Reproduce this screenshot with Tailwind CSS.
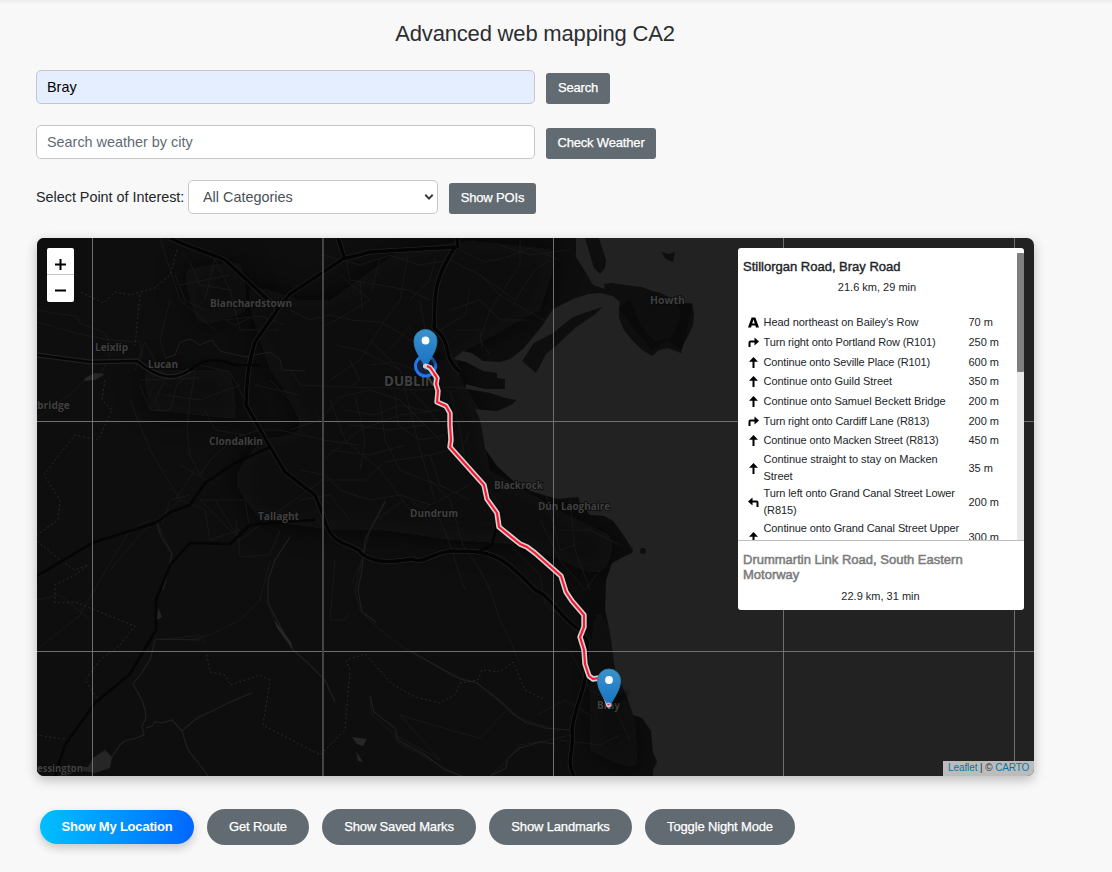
<!DOCTYPE html>
<html lang="en">
<head>
<meta charset="utf-8">
<title>Advanced web mapping CA2</title>
<script src="https://cdn.jsdelivr.net/npm/@tailwindcss/browser@4"></script>
</head>
<body class="h-[872px] overflow-hidden bg-[#f8f8f8] font-['Liberation_Sans',Arial,sans-serif] text-[#212529]">
<div class="h-1 bg-linear-to-b from-[#ececec] to-[#f8f8f8]"></div>
<main class="pl-9">
  <h1 class="mt-[15px] h-[51px] w-[998px] pt-px text-center text-[22px] leading-[28px] tracking-[-0.18px] text-[#2b2e31]">Advanced web mapping CA2</h1>

  <div class="flex h-[55px] items-start">
    <input value="Bray" class="h-[34px] w-[499px] rounded-[5px] border border-[#c4c6c9] bg-[#e5eefe] px-2.5 text-[14.4px] text-black">
    <button class="mt-[3px] ml-[11px] h-[31px] w-16 rounded-[3px] bg-[#616b71] pb-px text-[13px] tracking-[-0.17px] text-white [-webkit-text-stroke:0.25px_white]">Search</button>
  </div>
  <div class="flex h-[55px] items-start">
    <input placeholder="Search weather by city" class="h-[34px] w-[499px] rounded-[5px] border border-[#c4c6c9] bg-white px-2.5 text-[14.4px] placeholder:text-[#616b73]">
    <button class="mt-[3px] ml-[11px] h-[31px] w-[110px] rounded-[3px] bg-[#616b71] pb-px text-[13px] tracking-[-0.17px] text-white [-webkit-text-stroke:0.25px_white]">Check Weather</button>
  </div>
  <div class="flex h-[58px] items-start">
    <label class="w-[152px] text-[14.4px] leading-[34px] tracking-[-0.02px] whitespace-nowrap">Select Point of Interest:</label>
    <div class="flex h-[34px] w-[250px] items-center justify-between rounded-[5px] border border-[#c4c6c9] bg-white pr-[3px] pl-3.5 text-[14.4px] text-[#495057]">
      <span class="pt-px">All Categories</span>
      <svg width="10" height="8" viewBox="0 0 10 8" fill="none" stroke="#343a40" stroke-width="2"><path d="M1.3 1.8 5 5.6 8.7 1.8"/></svg>
    </div>
    <button class="mt-[3px] ml-[11px] h-[31px] w-[87px] rounded-[3px] bg-[#616b71] pb-px text-[13px] tracking-[-0.17px] text-white [-webkit-text-stroke:0.25px_white]">Show POIs</button>
  </div>

  <section class="relative ml-px h-[538px] w-[997px] overflow-visible rounded-[7px] shadow-[0_4px_12px_rgba(0,0,0,0.25)]">
    <svg class="block rounded-[7px]" width="997" height="538" viewBox="37 238 997 538" font-family="'Open Sans','Noto Sans',sans-serif">
      <defs>
        <linearGradient id="pin" x1="0" y1="0" x2="0" y2="1"><stop offset="0" stop-color="#3b93ca"/><stop offset="1" stop-color="#126fc6"/></linearGradient>
        <radialGradient id="shade"><stop offset="0" stop-color="#000" stop-opacity=".5"/><stop offset="1" stop-color="#000" stop-opacity="0"/></radialGradient>
        <g id="marker">
          <ellipse cx="10" cy="-10" rx="17" ry="7" transform="rotate(-38 10 -10)" fill="url(#shade)"/>
          <path d="M0 0C-2-9-11.5-17-11.5-28.500A11.500 11.500 0 0 1 11.500-28.500C11.500-17 2-9 0 0Z" fill="url(#pin)" stroke="#2e7bb0" stroke-width="1"/>
          <circle cy="-29" r="3.900" fill="#fff"/>
        </g>
        <clipPath id="coast"><use href="#landshape"/></clipPath>
        <filter id="soft" x="-20%" y="-20%" width="140%" height="140%"><feGaussianBlur stdDeviation="14"/></filter>
      </defs>
      <rect x="37" y="238" width="997" height="538" fill="#222"/>
      <path id="landshape" fill="#0e0e0e" d="M37 238H576L576 257 586 273 593 285 605 289 604 284 611 283 625 285 642 287 652 291 661 293 672 299 683 303 692 303 694 314 693 325 688 336 683 345 681 353 668 348 659 350 652 356 642 350 632 340 624 330 619 318 619 307 620 302 613 296 600 293 588 294 573 299 553 309 542 326 523 349 510 359 500 362 483 361 472 353 463 351 453 359 466 362 483 371 497 373 497 378 505 379 505 389 485 389 466 384 466 389 490 393 505 398 517 400 511 405 497 411 475 409 480 420 482 430 485 449 497 466 513 481 530 491 557 499 578 497 580 503 590 515 604 516 613 521 622 533 633 550 632 553 623 557 612 563 606 580 605 610 610 633 615 670 627 697 633 715 642 718 651 731 652 744 653 752 657 762 653 770 653 776H37Z"/>
      <g fill="#0e0e0e">
        <path d="M585 238H599L606 260 605 268 600 274 594 268Z"/>
        <path d="M522 361 534 343 553 333 573 317 590 311 603 307 594 315 575 328 557 345 546 354 536 373Z"/>
        <path d="M661 252 669 254 675 252 673 262 666 259Z"/><circle cx="643" cy="551" r="3"/>
      </g>
      <g clip-path="url(#coast)">
        <path fill="#090909" opacity=".7" filter="url(#soft)" d="M330 300 400 250 470 240 560 250 540 310 450 360 480 410 490 470 560 510 620 540 600 580 560 560 520 545 450 540 380 530 330 530 260 520 230 480 260 440 310 430 270 370 240 280 300 300Z"/>
        <path fill="#0a0a0a" opacity=".6" filter="url(#soft)" d="M180 270 240 260 250 310 200 330ZM140 370 230 370 240 420 150 410ZM590 590 605 600 635 720 640 776 590 750Z"/>
        <path fill="#0a0a0a" d="M619 308 635 330 652 350 668 340 682 350 692 305 676 300 681 315 672 338 655 342 640 325 630 300Z"/>
        <g fill="none" stroke="#1b1b1b" stroke-width=".8">
          <path d="M37 310 60 314 76 316 80 323 105 333 111 345 109 358 100 375 85 380 70 395 55 405 37 418M37 322 75 333 110 340 140 342 142 358M135 370 145 342 165 380 155 400 160 411 170 410 177 385 200 365 230 372 245 400"/>
          <path stroke="#232323" d="M165 358 175 355 180 342 190 339 200 345 212 340 220 351 245 357 270 352 280 360 282 370 305 371"/>
          <path d="M195 373 190 400 187 430 190 455 200 475 210 460 236 437 260 430 280 430 323 440 360 445M130 400 150 450 180 500 140 535 110 570M170 300 160 340 165 357M160 238 180 300 215 330M210 250 230 290 240 330 280 330"/>
          <path d="M175 275 185 300 205 310M190 262 200 285 232 290M180 285 230 275M215 258 205 300M225 320 260 316 285 325M225 320 235 325 250 318M140 385 150 410 165 411M140 380 200 378M165 395 200 400 240 385M205 410 215 430 245 435M270 380 290 400 300 420M255 385 300 395M200 500 245 500 250 530M180 465 215 485M195 470 175 500"/>
          <path d="M290 310 310 320 330 315 350 320 380 322 400 333 418 345 424 355M340 275 370 300 345 315 323 327M345 255 350 280 380 285 408 290 430 300M323 255 360 265 390 255 420 265 450 260 480 275 500 295 540 318 560 330M408 255 400 300 385 320 360 360 330 380M435 258 430 280 410 300M460 250 485 262 505 258 530 248 560 260M480 275 515 300 535 270 550 260M520 240 520 265 490 310 480 340 490 355M500 245 530 255 570 250M450 310 480 300 500 320 530 320M455 330 480 330 482 350"/>
          <path d="M290 370 300 385 350 387 390 388 420 390 450 387 500 391M290 430 320 420 340 397 370 390 400 400 420 420 440 440M320 480 365 480 385 462 430 455 450 450M323 460 360 430 400 415 440 410M330 400 345 440 380 470 410 510M370 340 400 370 410 410 420 450 435 500M380 400 385 440 400 470 450 490M340 490 370 500 400 495 430 505 470 485M450 390 460 430 465 460 500 505M400 370 360 350 335 345M390 350 410 325"/>
          <path d="M345 410 375 415 400 405 430 412M350 425 390 430 425 425M355 395 365 440 360 470M395 395 398 425 420 440 445 435M410 390 425 405 440 425M330 450 370 455 405 445M370 365 395 362 420 372M350 360 360 380 350 387M440 330 465 315 470 290M420 300 425 330M360 280 362 310M380 258 372 290M470 430 460 455 480 480M430 455 440 485 470 500M300 500 330 495 350 520M300 470 325 475 340 490"/>
          <path d="M385 500 370 530 362 560 355 590 360 610 380 630 400 645 410 652M362 560 352 583M375 520 405 500M335 560 330 620 345 620 350 612M410 500 440 520 450 545 465 590M430 480 450 500 463 545 480 570 490 590 500 620 510 640 520 665M500 520 515 550 540 575 545 605 560 615M540 520 560 560 585 590 600 570M570 500 575 550 590 590M560 530 590 530 620 545M545 490 560 550 575 545"/>
          <path d="M157 522 172 554 160 590M162 525 170 500 190 495M180 500 205 510 210 540 240 530M200 500 240 540 280 510 323 480M215 500 240 540M236 520 240 557 270 555 280 530M270 560 260 600 240 620 210 635 190 640M160 640 200 635 205 645M37 650 80 615 100 580 130 530 150 520M37 600 60 595 90 620"/>
          <path stroke="#202020" stroke-width="1.200" d="M157 524 161 536 172 554 168 570 163 590M155 640 150 660 140 675 133 684 142 700 145 710 146 718 142 726 144 735 136 738 125 741 120 745 112 757 98 757M146 728 152 726 155 722 162 723 172 720 182 731 188 750 200 765 208 776M155 640 160 639 200 640M182 731 197 718 210 712 230 702 252 693M290 537 275 560 268 580 268 603 293 650 307 662 325 680 335 702"/>
          <path d="M410 651 430 662 450 675 477 683 500 700 520 718 540 725 560 731M370 695 372 715 395 735 397 742 430 760 460 776M395 735 440 760 400 715 450 730 480 738 505 712M490 776 507 760 520 745 550 740 570 735M570 650 590 690 610 700 630 740M560 740 600 745 620 735M537 715 565 700 590 715"/>
          <path stroke="#202020" stroke-width="1.100" d="M410 651 430 662 460 679 477 683 503 704 512 713 525 722 545 728 570 730M370 696 374 712 395 728 398 740 425 755 445 770 462 776M490 776 506 768 508 758 520 748 540 742 555 744M385 502 365 540 362 570 358 590 362 612 376 622"/>
        </g>
        <g fill="none" stroke="#292929" stroke-dasharray="2 2.500" stroke-width="1">
          <path d="M177 250 170 275 155 288 130 295 115 292 104 303 80 292M140 295 135 345M105 380 102 400 112 410 98 440 75 435 55 460 44 475 60 500 58 520 37 535M37 541 60 560 75 570 88 565 75 575 55 585 55 603 75 602 100 612 135 626 120 645 100 660 85 680 98 700 70 740 37 735M206 650 210 672 225 675 230 685 260 675 270 680 263 725 320 755 345 730 350 670 346 660 365 654 392 684 415 697 440 703 455 695 460 683 478 680 482 670 500 672 513 662 525 690 545 700"/>
        </g>
        <g fill="none" stroke-linejoin="round">
          <path stroke="#202020" stroke-width="5" d="M170 238C190 248 210 253 225 260L278 309 255 342C247 370 247 380 246 405L270 447 285 472 315 495 323 515C330 545 345 542 358 550 370 565 395 562 412 559 425 565 435 550 455 551 490 551 500 553 535 590 550 595 560 618 580 630L587 640C590 690 575 700 572 730 575 750 565 760 574 776M278 309 290 294 343 259 370 252 455 247C430 285 436 300 434 328 455 345 440 355 460 372M338 238 345 260M457 238 458 248M37 355 90 362 137 361C160 380 175 380 190 370"/>
          <path stroke="#040404" stroke-width="3.500" d="M170 238C190 248 210 253 225 260L278 309 255 342C247 370 247 380 246 405L270 447 285 472 315 495 323 515C330 545 345 542 358 550 370 565 395 562 412 559 425 565 435 550 455 551 490 551 500 553 535 590 550 595 560 618 580 630L587 640C590 690 575 700 572 730 575 750 565 760 574 776M278 309 290 294 343 259 370 252 455 247C430 285 436 300 434 328 455 345 440 355 460 372M338 238 345 260M457 238 458 248"/>
          <path stroke="#050505" stroke-width="2.500" d="M37 355 90 362 137 361C160 380 175 380 190 370 210 355 220 360 235 365L260 365M270 447 235 463 205 483 190 505 171 512 155 523 92 543 37 576M315 520 280 522 250 525 230 544 190 543 170 565 156 600 156 630 130 674 95 703 65 745 55 776M480 551 492 545 497 525"/>
        </g>
        <g fill="#262626"><path d="M85 378 95 373 105 374 95 380 84 381ZM60 776 70 765 88 767 93 758 105 750 112 757 110 768 95 773 78 770 66 776Z"/><path d="M352 737 367 739 363 746 357 744ZM356 751 363 762 358 761ZM268 603 273 618 291 642 293 650 277 628ZM158 608 162 617 157 620Z"/></g>
      </g>
      <g fill="#404040" stroke="#0a0a0a" stroke-width="1.500" paint-order="stroke" font-size="10.500" font-weight="700">
        <text x="210" y="307" textLength="82" lengthAdjust="spacingAndGlyphs">Blanchardstown</text><text x="95" y="351" textLength="33" lengthAdjust="spacingAndGlyphs">Leixlip</text><text x="148" y="367.500" textLength="30" lengthAdjust="spacingAndGlyphs">Lucan</text>
        <text x="37" y="408.500" textLength="33" lengthAdjust="spacingAndGlyphs">bridge</text><text x="209" y="444.500" textLength="54" lengthAdjust="spacingAndGlyphs">Clondalkin</text><text x="258" y="519.500" textLength="41" lengthAdjust="spacingAndGlyphs">Tallaght</text>
        <text x="410" y="516.500" textLength="48" lengthAdjust="spacingAndGlyphs">Dundrum</text><text x="494" y="488.500" textLength="49" lengthAdjust="spacingAndGlyphs">Blackrock</text><text x="538" y="509.500" textLength="72" lengthAdjust="spacingAndGlyphs">Dún Laoghaire</text>
        <text x="650" y="304" textLength="35" lengthAdjust="spacingAndGlyphs">Howth</text><text x="597" y="709" textLength="23" lengthAdjust="spacingAndGlyphs">Bray</text><text x="37" y="771.500" textLength="46" lengthAdjust="spacingAndGlyphs">essington</text>
        <text x="384" y="385.500" font-size="14" textLength="52" lengthAdjust="spacingAndGlyphs">DUBLIN</text>
      </g>
      <g stroke="#6f6f6f" stroke-width="1"><path d="M92.500 238V776M553.500 238V776M783.500 238V776M1014.500 238V776M37 421.500H1034M37 651.500H1034"/><path stroke="#454545" stroke-width="2" d="M323 238V776"/></g>
      <circle cx="425.500" cy="366" r="10" fill="#3388ff" fill-opacity=".2" stroke="#2176f5" stroke-width="3"/>
      <g fill="none" stroke-linecap="round" stroke-linejoin="round">
        <path stroke="#000" stroke-opacity=".15" stroke-width="8" d="M426 366 430 368 437 378 436 384 438 391 437 402 446 406 450 413 450 425 451 440 450 447 484 485 487 499 497 513 499 527 520 544 527 547 535 553 561 576 566 592 572 601 584 615 584 627 580 637 584 650 585 664 589 676 593 679 599 678 609 705"/>
        <path stroke="#d2d2d2" stroke-width="5.400" d="M426 366 430 368 437 378 436 384 438 391 437 402 446 406 450 413 450 425 451 440 450 447 484 485 487 499 497 513 499 527 520 544 527 547 535 553 561 576 566 592 572 601 584 615 584 627 580 637 584 650 585 664 589 676 593 679 599 678 609 705"/>
        <path stroke="#ff1530" stroke-width="2.100" d="M427 366 430 368 437 378 436 384 438 391 437 402 446 406 450 413 450 425 451 440 450 447 484 485 487 499 497 513 499 527 520 544 527 547 535 553 561 576 566 592 572 601 584 615 584 627 580 637 584 650 585 664 589 676 593 679 599 678 609 705"/>
      </g>
      <use href="#marker" transform="translate(425.500 369.500)"/>
      <path d="M425.500 366 430 367.500 433 371.500" fill="none" stroke="#d2d2d2" stroke-width="5" stroke-linecap="round" stroke-linejoin="round"/><path d="M427 366 430 367.500 436 376" fill="none" stroke="#ff1530" stroke-width="2"/>
      <use href="#marker" transform="translate(609 709)"/>
      <circle cx="608.500" cy="705" r="2.400" fill="#d8c8ca"/><path d="M607.500 704.500h2" stroke="#ff1530" stroke-width="1.500"/>
    </svg>

    <div class="absolute top-2.5 left-2.5 flex h-[54px] w-[27px] flex-col rounded-[2px] bg-white">
      <button class="flex h-[27px] items-center justify-center border-b border-[#c4c4c4]"><svg width="11" height="11" viewBox="0 0 11 11" class="mt-1.5" stroke="#000" stroke-width="2"><path d="M0 5.500H11M5.500 0V11"/></svg></button>
      <button class="flex h-[27px] items-center justify-center pt-1"><svg width="11" height="3" viewBox="0 0 11 3"><path d="M0 .5H11V2.500H0Z"/></svg></button>
    </div>

    <aside class="absolute top-2.5 right-2.5 h-[362px] w-[286px] overflow-hidden rounded-[3px] bg-white text-[11px] leading-[17px] text-[#212529]">
      <div class="flex h-[293px] justify-between overflow-hidden border-b border-[#bfbfbf]">
        <div class="w-[279px] pt-[11px] pl-[5px]">
          <h2 class="text-[13px] leading-[15px] text-[#212529] [-webkit-text-stroke:0.4px_#212529]">Stillorgan Road, Bray Road</h2>
          <p class="mt-[5px] h-[34px] w-[268px] text-center">21.6 km, 29 min</p>
          <div class="grid grid-cols-[20.5px_205px_1fr] items-center tracking-[-0.04px]">
            <svg class="ml-[5px] h-[11px] w-[11px]" viewBox="0 0 11 11"><path fill-rule="evenodd" d="M0 10.500 3.600.5H7.400L11 10.500H7.900L7.400 8.600H3.600L3.100 10.500ZM4.200 6.500H6.800L5.500 2.600Z"/></svg><span class="py-[1.35px]">Head northeast on Bailey's Row</span><span>70 m</span>
            <svg class="ml-[5px] h-[11px] w-[11px]" viewBox="0 0 11 11"><path d="M.5 10V5.500Q.5 3.500 2.500 3.500H6.500V.5L11 4.500 6.500 8.500V5.500H2.500V10Z"/></svg><span class="py-[1.35px] tracking-[-0.14px]">Turn right onto Portland Row (R101)</span><span>250 m</span>
            <svg class="ml-[5px] h-[11px] w-[11px]" viewBox="0 0 11 11"><path d="M5.500 0 10 4.800H6.500V11H4.500V4.800H1Z"/></svg><span class="py-[1.35px] tracking-[-0.14px]">Continue onto Seville Place (R101)</span><span>600 m</span>
            <svg class="ml-[5px] h-[11px] w-[11px]" viewBox="0 0 11 11"><path d="M5.500 0 10 4.800H6.500V11H4.500V4.800H1Z"/></svg><span class="py-[1.35px]">Continue onto Guild Street</span><span>350 m</span>
            <svg class="ml-[5px] h-[11px] w-[11px]" viewBox="0 0 11 11"><path d="M5.500 0 10 4.800H6.500V11H4.500V4.800H1Z"/></svg><span class="py-[1.35px]">Continue onto Samuel Beckett Bridge</span><span>200 m</span>
            <svg class="ml-[5px] h-[11px] w-[11px]" viewBox="0 0 11 11"><path d="M.5 10V5.500Q.5 3.500 2.500 3.500H6.500V.5L11 4.500 6.500 8.500V5.500H2.500V10Z"/></svg><span class="py-[1.35px] tracking-[-0.14px]">Turn right onto Cardiff Lane (R813)</span><span>200 m</span>
            <svg class="ml-[5px] h-[11px] w-[11px]" viewBox="0 0 11 11"><path d="M5.500 0 10 4.800H6.500V11H4.500V4.800H1Z"/></svg><span class="py-[1.35px] tracking-[-0.12px]">Continue onto Macken Street (R813)</span><span>450 m</span>
            <svg class="ml-[5px] h-[11px] w-[11px]" viewBox="0 0 11 11"><path d="M5.500 0 10 4.800H6.500V11H4.500V4.800H1Z"/></svg><span class="pb-[0.6px]">Continue straight to stay on Macken<br>Street</span><span>35 m</span>
            <svg class="ml-[5px] h-[11px] w-[11px]" viewBox="0 0 11 11"><path d="M10.500 10V5.500Q10.500 3.500 8.500 3.500H4.500V.5L0 4.500 4.500 8.500V5.500H8.500V10Z"/></svg><span class="pb-[0.6px] tracking-[-0.1px]">Turn left onto Grand Canal Street Lower<br>(R815)</span><span>200 m</span>
            <svg class="ml-[5px] h-[11px] w-[11px]" viewBox="0 0 11 11"><path d="M5.500 0 10 4.800H6.500V11H4.500V4.800H1Z"/></svg><span class="h-[34px] tracking-[-0.1px] whitespace-nowrap">Continue onto Grand Canal Street Upper</span><span>300 m</span>
          </div>
        </div>
        <div class="mt-[5px] w-[7px] bg-[#e9e9e9]"><div class="h-[119px] rounded-[1px] bg-[#7f7f7f]"></div></div>
      </div>
      <div class="pt-[11px] pl-[5px]">
        <h2 class="text-[13px] leading-[15px] text-[#7b7b7b] [-webkit-text-stroke:0.5px_#7b7b7b]">Drummartin Link Road, South Eastern<br>Motorway</h2>
        <p class="mt-1.5 w-[275px] text-center">22.9 km, 31 min</p>
      </div>
    </aside>

    <div class="absolute right-0 bottom-0 h-[15px] w-[91px] rounded-br-[7px] bg-[#bcbcbc] pl-[5px] text-[10px] leading-[14px] tracking-[-0.1px] whitespace-nowrap text-[#333]"><span class="text-[#0078a8]">Leaflet</span> | © <span class="text-[#0078a8]">CARTO</span></div>
  </section>

  <div class="mt-[33px] ml-1 flex items-center gap-[13px] text-[13px] tracking-[-0.15px] text-white [-webkit-text-stroke:0.25px_white]">
    <button class="h-[34px] w-[154px] rounded-full bg-linear-to-r from-[#00bfff] to-[#0066ff] font-bold tracking-[-0.2px] shadow-[0_4px_10px_rgba(0,0,0,0.2)] [-webkit-text-stroke:0]">Show My Location</button>
    <button class="h-9 w-[102px] rounded-full bg-[#616b71]">Get Route</button>
    <button class="h-9 w-[154px] rounded-full bg-[#616b71]">Show Saved Marks</button>
    <button class="h-9 w-[143px] rounded-full bg-[#616b71]">Show Landmarks</button>
    <button class="h-9 w-[150px] rounded-full bg-[#616b71]">Toggle Night Mode</button>
  </div>
</main>
</body>
</html>
